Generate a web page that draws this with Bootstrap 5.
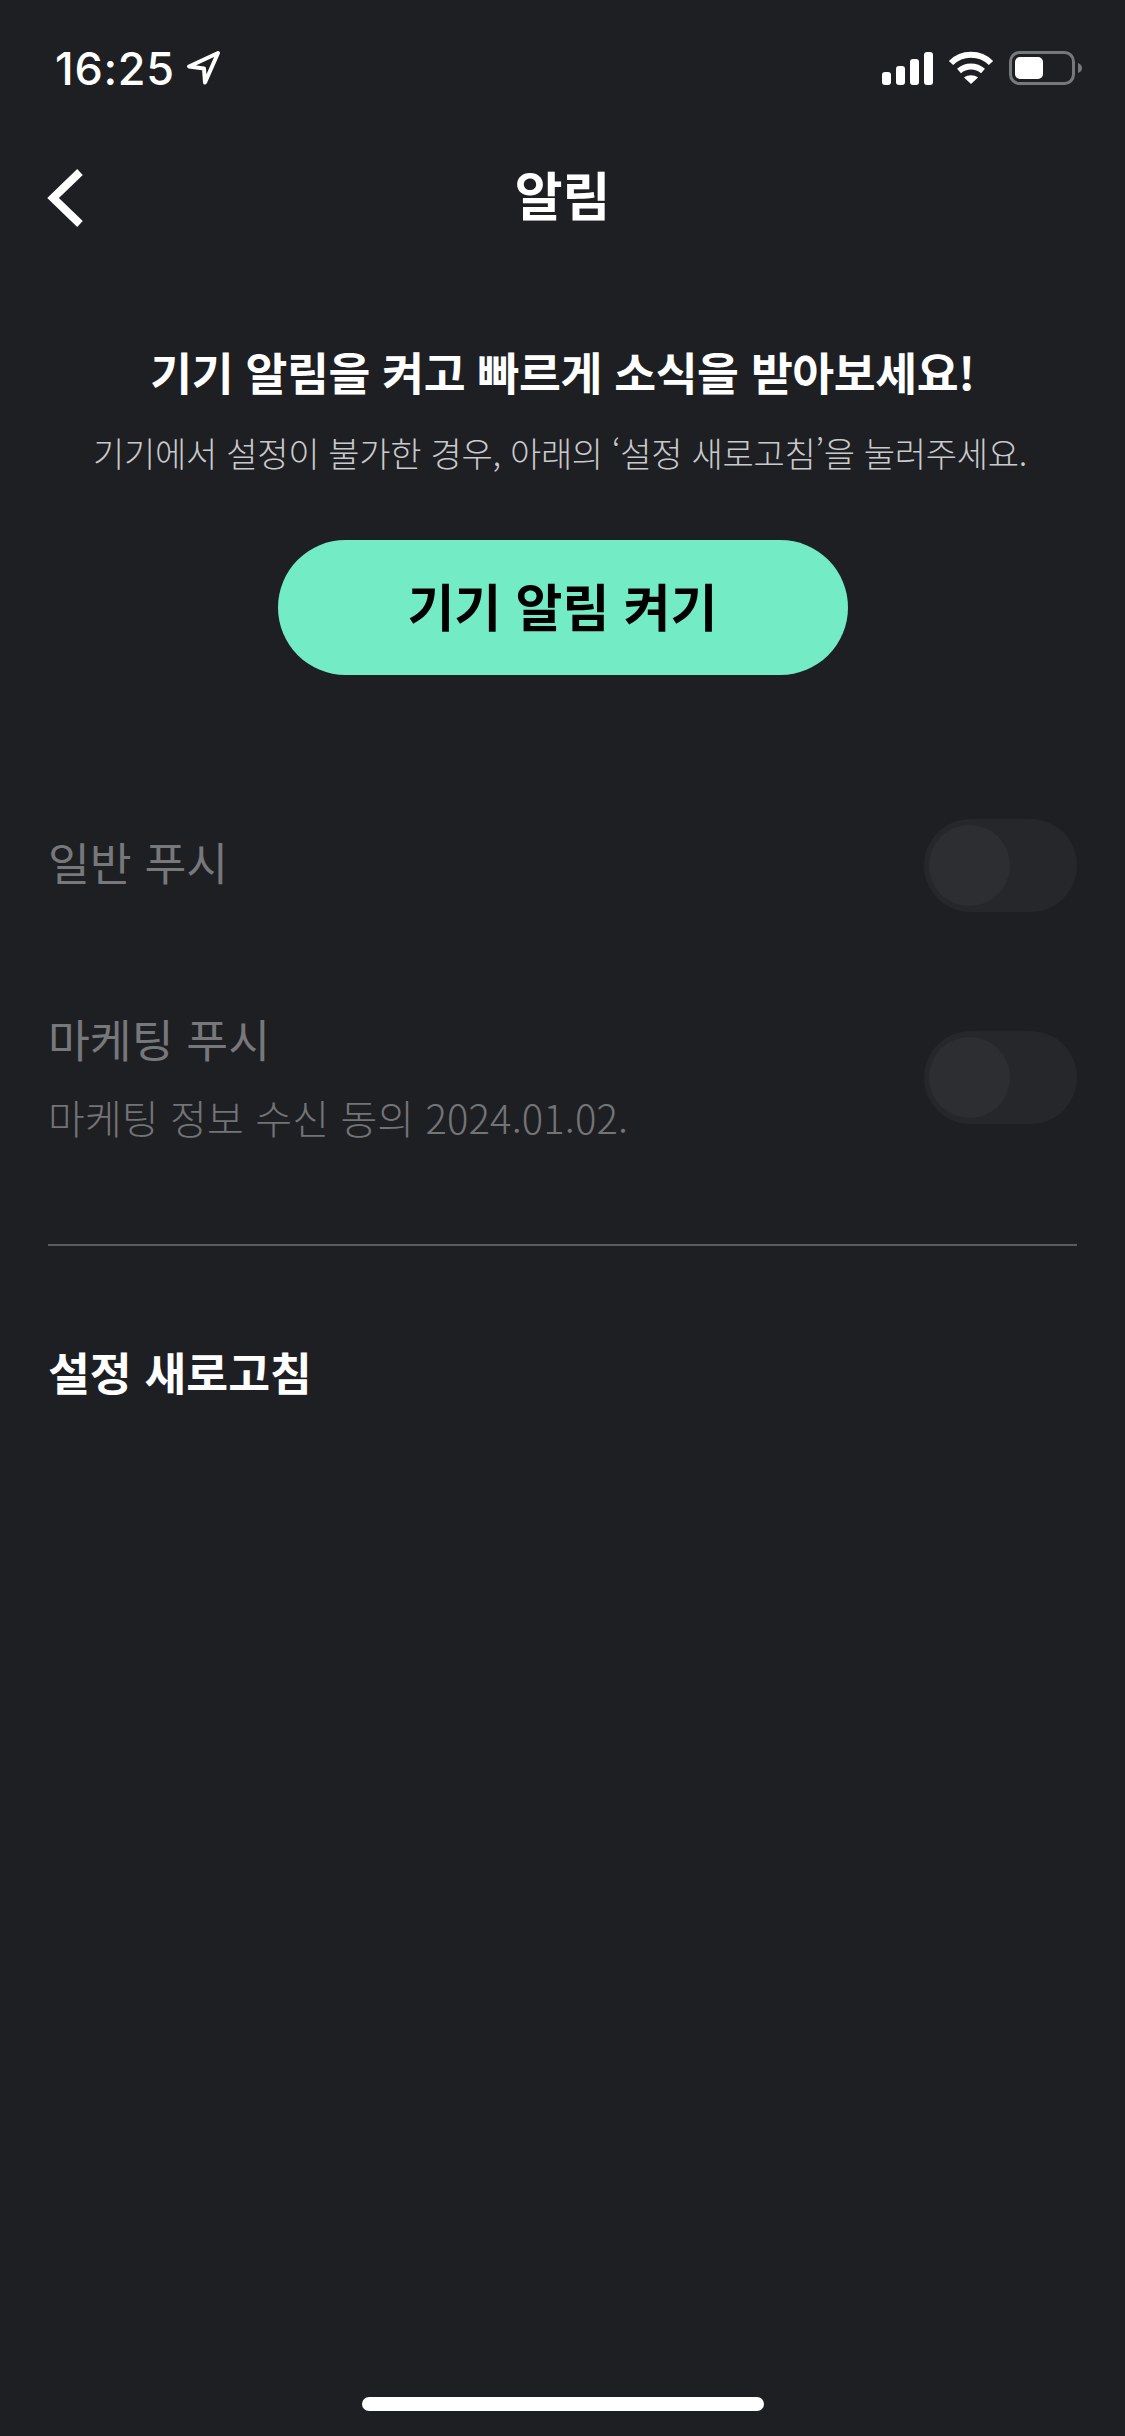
<!DOCTYPE html>
<html lang="ko">
<head>
  <meta charset="UTF-8">
  <meta name="viewport" content="width=device-width, initial-scale=1.0">
  <title>알림</title>
  <link rel="stylesheet" href="https://cdn.jsdelivr.net/npm/bootstrap@5.3.0/dist/css/bootstrap.min.css">
  <style>
    html, body { background: #1e1f23; }
    body { width: 1125px; height: 2436px; overflow: hidden; font-family: "Noto Sans CJK KR", "Noto Sans", sans-serif; color: #fff; }
    .screen { height: 2436px; }
    .status-row { height: 136px; padding: 0 43px 0 55px; }
    .clock { font-family: Inter, sans-serif; font-weight: 500; font-size: 45px; line-height: 1; letter-spacing: .7px; }
    .arrow-icon { margin-left: 2px; }
    .status-icons { gap: 15px; }
    .top-row { height: 119px; }
    .page-title { font-size: 52px; font-weight: 700; line-height: 1; margin: 0 0 4px; }
    .back-btn { left: 46px; top: 52%; transform: translateY(-50%); line-height: 0; }
    .promo { padding-top: 86px; }
    .promo-title { font-size: 45.500px; font-weight: 700; line-height: 60px; margin: 0; letter-spacing: -.4px; }
    .promo-sub { font-size: 34px; font-weight: 300; line-height: 44px; margin: 30px 0 0; padding-right: 5px; color: #c9cacc; letter-spacing: -.3px; }
    .enable-btn { width: 570px; height: 135px; margin-top: 65px; padding: 0 0 4px; border: 0; border-radius: 68px; background: #73ebc5; color: #000; font-size: 51px; font-weight: 700; }
    .enable-btn:hover { background: #73ebc5; color: #000; }
    .setting-list { padding: 143px 48px 0; }
    .setting-row { min-height: 95px; }
    .setting-row + .setting-row { margin-top: 95px; }
    .setting-name { font-size: 45.500px; font-weight: 400; line-height: 60px; color: #77787b; padding-bottom: 6px; }
    .setting-row > .setting-name { padding-bottom: 10px; }
    .setting-text { padding-bottom: 5px; }
    .setting-note { font-size: 40px; font-weight: 300; line-height: 50px; margin-top: 18px; color: #737477; letter-spacing: .12px; }
    .fake-switch { width: 153px; height: 93px; border-radius: 47px; background: #26272a; flex-shrink: 0; padding: 5px; }
    .fake-knob { width: 81px; height: 81px; margin-top: 1px; border-radius: 50%; background: #2d2e31; }
    .rule-line { margin: 97px 48px 0; border: 0; border-top: 2px solid #5a5b5e; opacity: 1; }
    .refresh-row { padding: 95px 48px 0; font-size: 45.500px; font-weight: 700; line-height: 60px; }
    .home-bar { left: 362px; bottom: 25px; width: 402px; height: 14px; border-radius: 7px; background: #fff; }
  </style>
</head>
<body>
  <div class="screen position-relative">
    <div class="status-row d-flex justify-content-between align-items-center">
      <div class="d-flex align-items-center gap-2">
        <span class="clock">16:25</span>
        <svg class="arrow-icon" width="36" height="36" viewBox="0 0 36 36" fill="none" stroke="#fff" stroke-width="4" stroke-linejoin="round"><path d="M33 3 4 16.500l15 2 1 14z"/></svg>
      </div>
      <div class="status-icons d-flex align-items-center">
        <svg width="51" height="33" viewBox="0 0 51 33" fill="#fff"><rect x="0" y="20" width="9" height="13" rx="3"/><rect x="14" y="14" width="9" height="19" rx="3"/><rect x="28" y="7" width="9" height="26" rx="3"/><rect x="42" y="0" width="9" height="33" rx="3"/></svg>
        <svg width="46" height="34" viewBox="0 0 46 34" fill="none" stroke="#fff" stroke-width="6"><path d="M3 12C14 1 32 1 43 12"/><path d="M11 20c7-6 17-6 24 0"/><path d="M23 33 16 26.500c4-3 10-3 14 0z" fill="#fff" stroke="none"/></svg>
        <svg width="73" height="34" viewBox="0 0 73 34"><rect x="1.500" y="1.500" width="63" height="31" rx="9" fill="none" stroke="#77787a" stroke-width="3"/><rect x="6" y="6" width="28" height="22" rx="5" fill="#fff"/><path d="M69 12c3 1 4 3 4 5s-1 4-4 5z" fill="#77787a"/></svg>
      </div>
    </div>

    <div class="top-row position-relative d-flex align-items-center justify-content-center">
      <a class="back-btn position-absolute" href="#" aria-label="뒤로">
        <svg width="38" height="60" viewBox="0 0 38 60" fill="none" stroke="#fff" stroke-width="8"><path d="M34 4 7 30l27 26"/></svg>
      </a>
      <h1 class="page-title">알림</h1>
    </div>

    <div class="promo text-center">
      <h2 class="promo-title">기기 알림을 켜고 빠르게 소식을 받아보세요!</h2>
      <p class="promo-sub">기기에서 설정이 불가한 경우, 아래의 ‘설정 새로고침’을 눌러주세요.</p>
      <button type="button" class="btn enable-btn">기기 알림 켜기</button>
    </div>

    <div class="setting-list">
      <div class="setting-row d-flex justify-content-between align-items-center">
        <div class="setting-name">일반 푸시</div>
        <div class="fake-switch"><div class="fake-knob"></div></div>
      </div>
      <div class="setting-row d-flex justify-content-between align-items-center">
        <div class="setting-text">
          <div class="setting-name">마케팅 푸시</div>
          <div class="setting-note">마케팅 정보 수신 동의 2024.01.02.</div>
        </div>
        <div class="fake-switch"><div class="fake-knob"></div></div>
      </div>
    </div>

    <hr class="rule-line">
    <div class="refresh-row">설정 새로고침</div>

    <div class="home-bar position-absolute"></div>
  </div>
</body>
</html>
